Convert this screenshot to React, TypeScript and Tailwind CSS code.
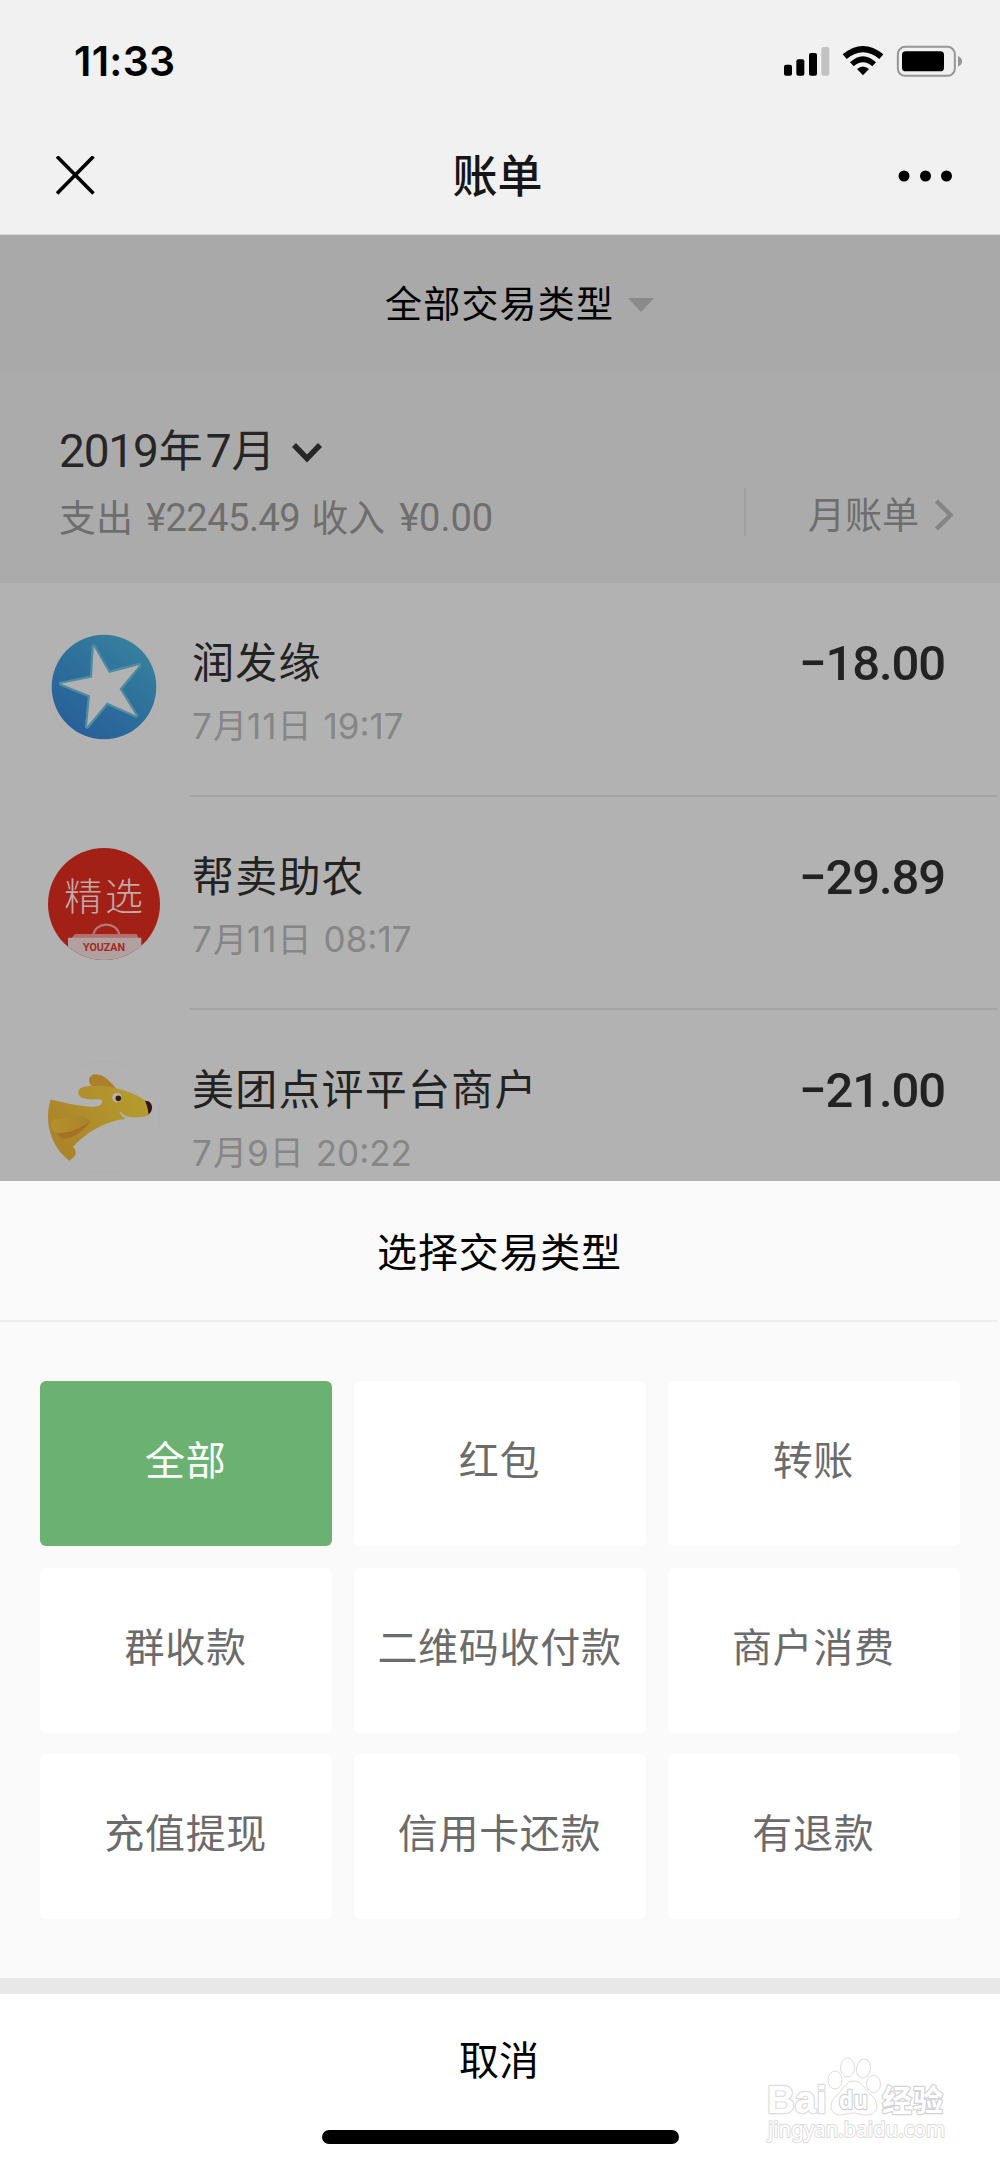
const bills = [
  { id: 1, name: '润发缘', date: ['7', '月', '11', '日'], time: '19:17', amount: '−18.00', icon: <StarIcon /> },
  { id: 2, name: '帮卖助农', date: ['7', '月', '11', '日'], time: '08:17', amount: '−29.89', icon: <YouzanIcon /> },
  { id: 3, name: '美团点评平台商户', date: ['7', '月', '9', '日'], time: '20:22', amount: '−21.00', icon: <DogIcon /> },
];

const types = ['全部', '红包', '转账', '群收款', '二维码收付款', '商户消费', '充值提现', '信用卡还款', '有退款'];

function StarIcon() {
  return (
    <svg className="w-28 h-28" viewBox="48 630.5 112 112">
      <defs>
        <linearGradient id="star-bg" x1="0.2" y1="0.9" x2="0.8" y2="0.1">
          <stop offset="0" stopColor="#286099" />
          <stop offset="0.5" stopColor="#2d6f9b" />
          <stop offset="1" stopColor="#367f9d" />
        </linearGradient>
      </defs>
      <circle cx="104" cy="690" r="55.5" fill="none" stroke="#adadad" strokeWidth="0.6" />
      <circle cx="104" cy="686.5" r="52.3" fill="url(#star-bg)" />
      <path
        d="M93.7 646 L109 672.5 L139.500 664.5 L119.5 688.5 L136 715 L107 702 L87 726 L90 695 L61 683.3 L92 677 Z"
        fill="#b2b2b2"
        stroke="#4f8ca2"
        strokeWidth="4.4"
        strokeLinejoin="round"
      />
      <path
        d="M93.7 646 L109 672.5 L139.500 664.5 L119.5 688.5 L136 715 L107 702 L87 726 L90 695 L61 683.3 L92 677 Z"
        fill="#b2b2b2"
      />
    </svg>
  );
}

function YouzanIcon() {
  return (
    <svg className="w-28 h-28" viewBox="54 53 336 336">
      <defs>
        <clipPath id="youzan-clip">
          <circle cx="222" cy="221" r="168" />
        </clipPath>
      </defs>
      <g clipPath="url(#youzan-clip)">
        <rect x="54" y="53" width="336" height="336" fill="#a22016" />
        <path d="M190 316 C194 272 264 272 268 316" fill="none" stroke="#b87772" strokeWidth="7" />
        <path d="M136 311 H320 L326 324 H124 Z" fill="#b3716c" />
        <path d="M114 322 H334 V390 H114 Z" fill="#b1a0a0" />
        <text x="225" y="240" textAnchor="middle" fontSize="114" letterSpacing="8" fontWeight="300" fill="#bfaaa8" fontFamily="'Noto Sans CJK SC', sans-serif">精选</text>
        <text x="159" y="363" textLength="126" lengthAdjust="spacingAndGlyphs" fontSize="30" fontWeight="700" fill="#a22a20" fontFamily="Roboto, sans-serif">YOUZAN</text>
      </g>
    </svg>
  );
}

function DogIcon() {
  return (
    <svg className="w-28 h-28" viewBox="54 33 336 336">
      <defs>
        <clipPath id="dog-clip">
          <circle cx="222" cy="201" r="168" />
        </clipPath>
        <linearGradient id="dog-body" x1="0" y1="0.7" x2="1" y2="0.3">
          <stop offset="0" stopColor="#ab812a" />
          <stop offset="1" stopColor="#b59c2e" />
        </linearGradient>
        <linearGradient id="dog-fur" x1="0" y1="0.5" x2="1" y2="0.5">
          <stop offset="0" stopColor="#b3922c" />
          <stop offset="1" stopColor="#ab812a" />
        </linearGradient>
      </defs>
      <circle cx="222" cy="201" r="167" fill="none" stroke="#acacac" strokeWidth="1.5" />
      <g clipPath="url(#dog-clip)">
        <path d="M184 108 C171 92 178 73 198 73 C222 74 240 94 259 117 L235 126 Z" fill="#aa802a" />
        <path
          d="M40 144 C90 154 140 169 188 170 C208 171 218 163 216 154 C215 147 206 147 198 148 C175 149 145 146 145 128 C145 111 165 108 190 108 C230 106 262 114 290 124 C315 133 334 143 348 153 C364 160 368 188 355 196 C343 202 325 202 304 202 C288 199 280 193 267 183 C271 194 278 201 288 206 C215 215 165 253 129 290 C138 299 140 309 134 319 L117 333 L40 333 Z"
          fill="url(#dog-body)"
        />
        <path d="M78 246 C95 256 145 241 181 214 C160 247 120 272 92 264 Z" fill="#a47125" />
        <path d="M63 224 C61 207 80 207 105 205 C135 200 160 190 181 214 C150 234 120 247 90 249 C74 247 64 238 63 224 Z" fill="url(#dog-fur)" />
      </g>
      <circle cx="261" cy="143" r="14" fill="#b9b6ad" />
      <circle cx="265" cy="145" r="8.5" fill="#3a1811" />
      <path d="M345 152 C360 152 367 162 366 174 C365 184 361 190 355 192 C355 178 350 164 345 152 Z" fill="#31150f" />
    </svg>
  );
}

function StatusIcons() {
  return (
    <svg className="w-[180px] h-8" viewBox="72 45 540 96">
      <rect x="72" y="104" width="24" height="33" rx="6" />
      <rect x="109" y="88" width="24" height="49" rx="6" />
      <rect x="147" y="69" width="24" height="68" rx="6" />
      <rect x="184" y="51" width="24" height="86" rx="6" fill="#c2c2c2" />
      <path d="M248 73 Q309 23 370 73 L358 87 Q309 47 260 87 Z" />
      <path d="M270 97 Q309 61 348 97 L337 109 Q309 84 281 109 Z" />
      <path d="M291 117 Q309 102 327 117 L309 136 Z" />
      <rect x="413.500" y="50.500" width="171" height="87" rx="22" fill="none" stroke="#969696" strokeWidth="6" />
      <rect x="426" y="64" width="126" height="60" rx="11" />
      <path d="M594 78 Q606 83 606 94 Q606 105 594 110 Z" fill="#969696" />
    </svg>
  );
}

function Watermark() {
  return (
    <svg className="absolute left-[740px] top-[2030px] w-[260px] h-[135px]" viewBox="0 0 260 135" fill="#fff" stroke="#dcdcdc">
      <ellipse cx="95" cy="50" rx="7" ry="9" />
      <ellipse cx="107.500" cy="37.500" rx="7" ry="9.500" />
      <ellipse cx="123.500" cy="38.500" rx="7" ry="9.500" transform="rotate(12 123.500 38.500)" />
      <ellipse cx="133.500" cy="54" rx="7" ry="8.500" />
      <path d="M114 51 C123 51 126 62 134 68 C140 77 136 85 126 85 C120 85 117 83 113 83 C108 83 105 85 99 85 C90 84 89 74 94 68 C102 62 105 51 114 51 Z" />
      <g paintOrder="stroke" strokeWidth="2.400" strokeLinejoin="round">
        <text x="27" y="83" fontSize="38" fontWeight="700" textLength="60" lengthAdjust="spacingAndGlyphs" fontFamily="'Liberation Sans', sans-serif">Bai</text>
        <text x="99" y="79" fontSize="25" fontWeight="700" stroke="#cfcfcf" textLength="29" lengthAdjust="spacingAndGlyphs" fontFamily="'Open Sans', sans-serif">du</text>
        <text x="142" y="81" fontSize="30" fontWeight="700" stroke="#d2d2d2" textLength="61" fontFamily="'Noto Sans CJK SC', sans-serif">经验</text>
        <text x="28" y="107" fontSize="21" textLength="177" lengthAdjust="spacingAndGlyphs" strokeWidth="2" fontFamily="'Noto Sans', sans-serif">jingyan.baidu.com</text>
      </g>
    </svg>
  );
}

export default function App() {
  return (
    <div className="relative flex flex-col w-[1000px] h-[2165px] overflow-hidden bg-[#f1f1f1] text-black font-['Noto_Sans_CJK_SC',sans-serif]">
      <header className="flex flex-col h-[235px] border-b border-[#d6d6d6]">
        <div className="flex items-center justify-between h-[122px] pl-[74px] pr-9">
          <div className="pt-px font-[Inter,sans-serif] text-[41px] font-semibold leading-none tracking-[0.3px]">11:33</div>
          <StatusIcons />
        </div>
        <div className="flex items-center justify-between h-[108px] pl-14 pr-12">
          <svg className="w-10 h-10" viewBox="0 0 40 40" fill="none" stroke="#000" strokeWidth="3.6">
            <path d="M1 0.500 L37.500 37.500 M37.500 0.500 L1 37.500" />
          </svg>
          <div className="pb-[5px] pl-px text-[45px] font-medium leading-none text-[#161616]">账单</div>
          <svg className="w-[54px] h-3" viewBox="0 0 54 12">
            <circle cx="6" cy="6" r="5.500" />
            <circle cx="27.500" cy="6" r="5.500" />
            <circle cx="48.500" cy="6" r="5.500" />
          </svg>
        </div>
      </header>

      <div className="flex items-center h-[138px] pl-[385px] bg-[#a9a9a9]">
        <div className="pb-[3px] text-[37px] tracking-[1.2px] leading-none">全部交易类型</div>
        <svg className="w-[26px] h-[14px] mt-0.5 ml-[14px]" viewBox="0 0 26 14">
          <path d="M0 0 H26 L13 14 Z" fill="#8a8a8a" />
        </svg>
      </div>

      <section className="flex items-start justify-between h-[210px] bg-[#ababab]">
        <div className="pl-[59px] pt-[52px]">
          <div className="flex items-center h-[52px] text-[#262626] leading-none">
            <span className="font-[Roboto,sans-serif] text-[46px] tracking-[-1.2px]">2019</span>
            <span className="pb-1.5 ml-px text-[44px]">年</span>
            <span className="font-[Roboto,sans-serif] text-[46px] ml-[3px]">7</span>
            <span className="pb-1.5 text-[44px]">月</span>
            <svg className="w-8 h-6 mt-[3px] ml-4" viewBox="0 0 32 24" fill="none" stroke="#262626" strokeWidth="5.500">
              <path d="M3 4 L16 17.500 L29 4" />
            </svg>
          </div>
          <div className="flex items-center h-[44px] mt-[19px] text-[#6e6e6e] leading-none whitespace-pre">
            <span className="pb-1 text-[37px]">支出</span>
            <span className="font-[Roboto,sans-serif] text-[38px] tracking-[-0.5px] ml-[13px]">¥2245.49</span>
            <span className="pb-1 text-[37px] ml-[11px]">收入</span>
            <span className="font-[Roboto,sans-serif] text-[38px] ml-[14px]">¥0.00</span>
          </div>
        </div>
        <div className="flex items-center h-12 mt-[115px] pr-[46px] border-l-2 border-[#a0a0a0]">
          <span className="pt-0.5 pl-[62px] text-[37px] leading-none text-[#6e6e6e]">月账单</span>
          <svg className="w-5 h-8 mt-[5px] ml-[15px]" viewBox="0 0 20 32" fill="none" stroke="#858585" strokeWidth="4.500">
            <path d="M2.500 2 L16.500 16 L2.500 30" />
          </svg>
        </div>
      </section>

      <ul className="h-[598px] overflow-hidden bg-[#b2b2b2]">
        {bills.map((bill) => (
          <li key={bill.id} className="flex h-[213.500px] pl-12 pr-[3px]">
            <div className="pt-[47.500px] [li:nth-child(n+2)_&]:pt-[51px]">{bill.icon}</div>
            <div className="flex flex-1 justify-between ml-[29px] pl-[3px] pt-[54px] pr-[52px] border-b-2 border-[#a4a4a4]">
              <div>
                <div className="text-[42px] leading-[46px] tracking-[1.2px] text-[#222]">{bill.name}</div>
                <div className="flex items-center h-10 mt-[23px] text-[35px] leading-none text-[#868686]">
                  {bill.date.map((part, i) => (
                    <span key={i} className={i % 2 ? 'pb-1 text-[34px]' : 'font-[Inter,sans-serif] tracking-[1.1px]'}>{part}</span>
                  ))}
                  <span className="ml-3 font-[Inter,sans-serif]">{bill.time}</span>
                </div>
              </div>
              <div className="mt-[3px] font-[Roboto,sans-serif] text-[49px] leading-[48px] tracking-[-1.1px] font-medium text-[#222]">{bill.amount}</div>
            </div>
          </li>
        ))}
      </ul>

      <section className="flex flex-col h-[984px] bg-[#fafafa]">
        <div className="flex items-center justify-center h-[141px] pb-0.5 pl-0.5 mr-[3px] border-b-2 border-[#ededed] text-[40px] tracking-[0.8px] leading-none">选择交易类型</div>
        <div className="grid grid-cols-3 content-start gap-[21.500px] px-10 pt-[59px] h-[656px]">
          {types.map((type, i) => (
            <button
              key={type}
              className={
                i === 0
                  ? 'h-[165px] pb-[11px] pr-px rounded-md bg-[#6bb172] text-white text-[40px] tracking-[0.7px] leading-none'
                  : 'h-[165px] pb-[11px] pr-px rounded-md bg-white text-[#6b6b6b] text-[40px] tracking-[0.7px] leading-none'
              }
            >
              {type}
            </button>
          ))}
        </div>
        <div className="h-4 bg-[#e8e8e8]" />
        <div className="flex flex-col items-center flex-1 bg-white">
          <button className="h-[136px] pb-2 pr-0.5 text-[40px] leading-none">取消</button>
          <div className="w-[357px] h-[14px] rounded-full bg-black" />
        </div>
      </section>

      <Watermark />
    </div>
  );
}
